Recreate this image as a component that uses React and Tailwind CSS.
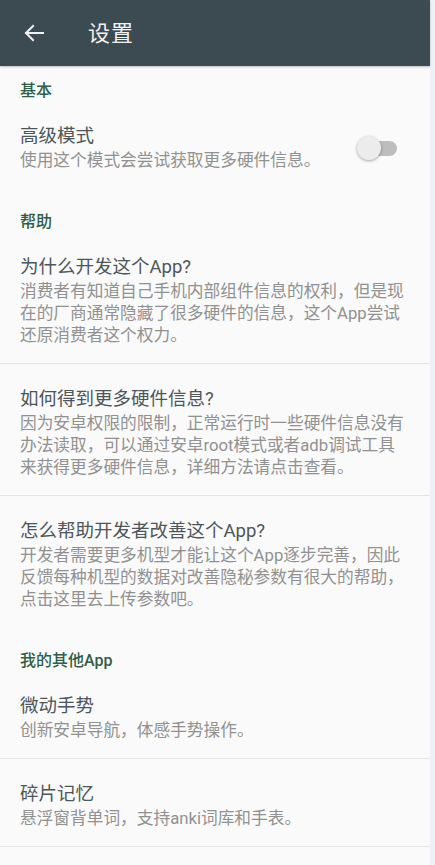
import { useState } from 'react';

const FONT = '"Roboto", "Noto Sans CJK SC", "Noto Sans", sans-serif';

const help = [
  {
    title: '为什么开发这个App?',
    lines: ['消费者有知道自己手机内部组件信息的权利，但是现', '在的厂商通常隐藏了很多硬件的信息，这个App尝试', '还原消费者这个权力。'],
  },
  {
    title: '如何得到更多硬件信息?',
    lines: ['因为安卓权限的限制，正常运行时一些硬件信息没有', '办法读取，可以通过安卓root模式或者adb调试工具', '来获得更多硬件信息，详细方法请点击查看。'],
  },
  {
    title: '怎么帮助开发者改善这个App?',
    lines: ['开发者需要更多机型才能让这个App逐步完善，因此', '反馈每种机型的数据对改善隐秘参数有很大的帮助，', '点击这里去上传参数吧。'],
  },
];

const apps = [
  { title: '微动手势', lines: ['创新安卓导航，体感手势操作。'] },
  { title: '碎片记忆', lines: ['悬浮窗背单词，支持anki词库和手表。'] },
];

function Category({ children, first }) {
  return (
    <div className={`px-5 ${first ? 'pt-[15px]' : 'pt-[24px]'} text-[16px] leading-[20px] font-medium text-[#2f5d45]`}>
      {children}
    </div>
  );
}

function Item({ title, lines, divider, right }) {
  return (
    <div className={`flex items-center pl-5 pr-5 pt-[23px] pb-[16px] ${divider ? 'border-b border-[#e3e3e3]' : ''}`}>
      <div className="flex-1 min-w-0">
        <p className="text-[18.5px] leading-[24px] text-[#4d565b]">{title}</p>
        <div className="mt-[2px] text-[16.7px] leading-[22px] text-[#919191]">
          {lines.map(l => <span key={l} className="block whitespace-nowrap">{l}</span>)}
        </div>
      </div>
      {right}
    </div>
  );
}

export default function App() {
  const [advanced, setAdvanced] = useState(false);

  const toggle = (
    <button
      onClick={() => setAdvanced(v => !v)}
      className="relative w-[40px] h-[26px] mr-[13px] flex items-center flex-shrink-0">
      <span className={`absolute left-[11px] right-0 h-[15px] rounded-full ${advanced ? 'bg-[#8fb8a0]' : 'bg-[#bdbdbd]'}`} />
      <span className={`absolute top-[1px] w-[24px] h-[24px] rounded-full shadow-[0_1px_3px_rgba(0,0,0,0.35)] ${advanced ? 'left-[16px] bg-[#2f5d45]' : 'left-0 bg-[#ececec]'}`} />
    </button>
  );

  return (
    <div className="flex w-[435px] h-[865px] overflow-hidden bg-[#eef1f7]" style={{ fontFamily: FONT }}>
      <div className="w-[430px] h-full bg-[#fafafa] flex flex-col">
        {/* Toolbar */}
        <div className="h-[66px] flex-shrink-0 bg-[#3c4a52] flex items-center shadow-[0_1px_2px_rgba(0,0,0,0.25)]">
          <svg width="22" height="22" viewBox="0 0 22 22" className="ml-[23px]" fill="none" stroke="#f2f2f2" strokeWidth="2" strokeLinecap="square">
            <path d="M20 11H3M10 4l-7 7 7 7" />
          </svg>
          <span className="ml-[43px] text-[22px] text-[#f2f2f2] tracking-[1px]">设置</span>
        </div>

        <Category first>基本</Category>
        <Item
          title="高级模式"
          lines={['使用这个模式会尝试获取更多硬件信息。']}
          right={toggle}
        />

        <Category>帮助</Category>
        {help.map((h, i) => (
          <Item key={h.title} title={h.title} lines={h.lines} divider={i < help.length - 1} />
        ))}

        <Category>我的其他App</Category>
        {apps.map(a => (
          <Item key={a.title} title={a.title} lines={a.lines} divider />
        ))}
      </div>
    </div>
  );
}
